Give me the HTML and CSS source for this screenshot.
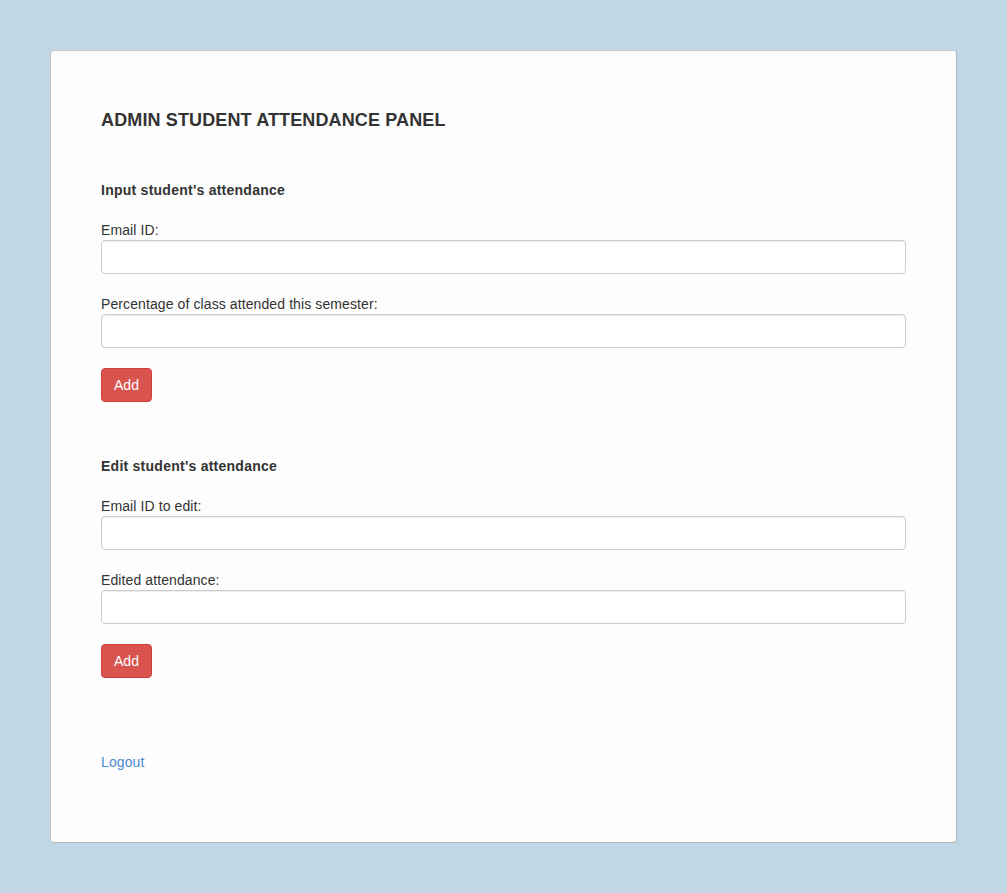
FILE: index.html
```html
<!DOCTYPE html>
<html>
<head>
<meta charset="utf-8">
<title>Admin Student Attendance Panel</title>
<link rel="stylesheet" href="styles.css">
</head>
<body>
<div class="panel">
  <h1 class="title">ADMIN STUDENT ATTENDANCE PANEL</h1>

  <form class="section section-input">
    <h2 class="section-title">Input student's attendance</h2>
    <div class="form-group">
      <label class="label">Email ID:</label>
      <input class="input" type="text">
    </div>
    <div class="form-group">
      <label class="label">Percentage of class attended this semester:</label>
      <input class="input" type="text">
    </div>
    <button class="btn" type="button">Add</button>
  </form>

  <form class="section section-edit">
    <h2 class="section-title">Edit student's attendance</h2>
    <div class="form-group">
      <label class="label">Email ID to edit:</label>
      <input class="input" type="text">
    </div>
    <div class="form-group">
      <label class="label">Edited attendance:</label>
      <input class="input" type="text">
    </div>
    <button class="btn" type="button">Add</button>
  </form>

  <a class="logout" href="#">Logout</a>
</div>
</body>
</html>
```
FILE: styles.css
```css
* { box-sizing: border-box; }

html, body {
  margin: 0;
  padding: 0;
}

body {
  background: #c1d7e5;
  font-family: "Liberation Sans", Arial, sans-serif;
  color: #333;
  padding: 50px;
  min-height: 893px;
}

.panel {
  width: 907px;
  height: 793px;
  background: #fdfdfd;
  border: 1px solid #c4c9cc;
  border-right-color: #b0b4b8;
  border-bottom-color: #b0b4b8;
  border-radius: 4px;
  padding: 59px 50px 0 50px;
  display: flex;
  flex-direction: column;
  align-items: flex-start;
}

.title {
  margin: 0;
  font-size: 18px;
  line-height: 20px;
  letter-spacing: 0.13px;
  font-weight: bold;
  color: #333;
}

.section {
  width: 100%;
  display: flex;
  flex-direction: column;
  align-items: flex-start;
}

.section-input { margin-top: 50px; }
.section-edit { margin-top: 54px; }

.section-title {
  margin: 0 0 20px 0;
  font-size: 14px;
  line-height: 20px;
  letter-spacing: 0.25px;
  font-weight: bold;
  color: #333;
}

.form-group {
  width: 100%;
  margin-bottom: 20px;
}

.label {
  display: block;
  font-size: 14px;
  line-height: 20px;
  letter-spacing: 0.1px;
  color: #333;
}

.input {
  display: block;
  width: 100%;
  height: 34px;
  margin: 0;
  padding: 6px 12px;
  font-size: 14px;
  font-family: inherit;
  background: #fff;
  border: 1px solid #ccc;
  border-radius: 4px;
  box-shadow: inset 0 1px 1px rgba(0,0,0,0.075);
}

.btn {
  height: 34px;
  width: 51px;
  padding: 0;
  font-family: inherit;
  font-size: 14px;
  color: #fff;
  background: #d9534f;
  border: 1px solid #d43f3a;
  border-radius: 4px;
  cursor: pointer;
}

.logout {
  margin-top: 74px;
  font-size: 14px;
  line-height: 20px;
  letter-spacing: 0.1px;
  color: #4a8bd0;
  text-decoration: none;
}
```
